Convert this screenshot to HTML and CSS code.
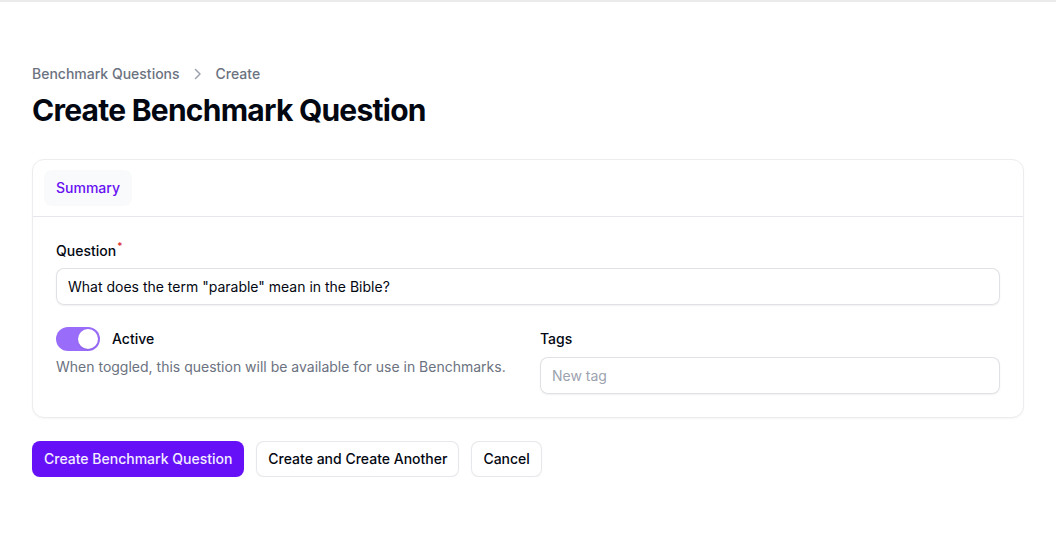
FILE: index.html
```html
<!DOCTYPE html>
<html lang="en">
<head>
<meta charset="utf-8">
<title>Create Benchmark Question</title>
<link rel="stylesheet" href="styles.css">
</head>
<body>
<div class="topline"></div>
<main class="page">
  <nav class="breadcrumbs">
    <span class="crumb">Benchmark Questions</span>
    <svg class="chev" viewBox="0 0 20 20" width="20" height="20"><path d="M7.5 5.5l4.5 4.5-4.5 4.5" fill="none" stroke="currentColor" stroke-width="1.5" stroke-linecap="round" stroke-linejoin="round"/></svg>
    <span class="crumb">Create</span>
  </nav>
  <h1 class="heading">Create Benchmark Question</h1>

  <section class="card">
    <div class="tabs">
      <button class="tab">Summary</button>
    </div>
    <div class="panel">
      <div class="field">
        <label class="label">Question<span class="req">*</span></label>
        <div class="input"><span class="value">What does the term "parable" mean in the Bible?</span></div>
      </div>
      <div class="grid">
        <div class="field wide-gap">
          <div class="toggle-row">
            <span class="toggle"><span class="knob"></span></span>
            <span class="label">Active</span>
          </div>
          <p class="help">When toggled, this question will be available for use in Benchmarks.</p>
        </div>
        <div class="field wide-gap">
          <label class="label">Tags</label>
          <div class="input"><span class="placeholder">New tag</span></div>
        </div>
      </div>
    </div>
  </section>

  <div class="actions">
    <button class="btn primary">Create Benchmark Question</button>
    <button class="btn">Create and Create Another</button>
    <button class="btn">Cancel</button>
  </div>
</main>
</body>
</html>
```

FILE: styles.css
```css
* { box-sizing: border-box; }
html, body { margin: 0; padding: 0; background: #ffffff; }
body {
  font-family: Inter, "Noto Sans", sans-serif;
  color: #030712;
  font-size: 14px;
  line-height: 20px;
}
.topline {
  height: 2px;
  background: #ebebec;
}
.page {
  padding: 62px 32px 0 32px;
  display: flex;
  flex-direction: column;
}
.breadcrumbs {
  display: flex;
  align-items: center;
  gap: 8px;
  color: #6b7280;
  font-size: 14px;
  font-weight: 500;
  line-height: 20px;
}
.chev { color: #9ca3af; }
.heading {
  margin: 8px 0 0 0;
  font-size: 30px;
  line-height: 36px;
  font-weight: 700;
  letter-spacing: -0.025em;
  color: #030712;
}
.card {
  margin-top: 31px;
  background: #fff;
  border-radius: 12px;
  border: 1px solid #ececee;
  box-shadow: 0 1px 2px rgba(0,0,0,0.04);
}
.tabs {
  padding: 10px 12px 10px 11px;
  border-bottom: 1px solid #e5e7eb;
}
.tab {
  font-family: inherit;
  font-size: 14px;
  font-weight: 500;
  line-height: 20px;
  color: #6610f2;
  background: #f9fafb;
  border: none;
  border-radius: 8px;
  padding: 8px 12px;
}
.panel {
  padding: 24px 23px 23px 23px;
  display: flex;
  flex-direction: column;
  gap: 24px;
}
.field {
  display: flex;
  flex-direction: column;
  gap: 7px;
}
.field.wide-gap { gap: 8px; }
.label {
  display: block;
  height: 20px;
  font-size: 14px;
  font-weight: 500;
  line-height: 20px;
  color: #030712;
}
.req {
  position: relative;
  top: -6px;
  color: #dc2626;
  font-size: 10px;
  margin-left: 1px;
}
.input {
  height: 37px;
  border-radius: 8px;
  box-shadow: inset 0 0 0 1px #e0e1e4, 0 1px 2px rgba(0,0,0,0.06);
  background: #fff;
  padding: 0 12px;
  display: flex;
  align-items: center;
  font-size: 14px;
}
.value { color: #030712; }
.placeholder { color: #9ca3af; }
.grid {
  display: grid;
  grid-template-columns: 1fr 1fr;
  column-gap: 24px;
}
.toggle-row {
  display: flex;
  align-items: center;
  gap: 12px;
  height: 20px;
}
.toggle {
  width: 44px;
  height: 24px;
  border-radius: 12px;
  background: #9a6cfa;
  display: flex;
  align-items: center;
  justify-content: flex-end;
  padding: 2px;
}
.knob {
  width: 20px;
  height: 20px;
  border-radius: 50%;
  background: #fff;
  box-shadow: 0 1px 2px rgba(0,0,0,0.1);
}
.help {
  margin: 0;
  color: #6b7280;
  font-size: 14px;
  line-height: 20px;
}
.actions {
  margin-top: 23px;
  display: flex;
  gap: 12px;
}
.btn {
  font-family: inherit;
  font-size: 14px;
  font-weight: 500;
  line-height: 20px;
  height: 36px;
  padding: 0 12px;
  border-radius: 8px;
  background: #fff;
  color: #030712;
  border: none;
  box-shadow: inset 0 0 0 1px #e5e7eb, 0 1px 2px rgba(0,0,0,0.04);
}
.btn.primary {
  background: #6610f8;
  color: #f3edff;
  box-shadow: 0 1px 2px rgba(0,0,0,0.05);
}
```
